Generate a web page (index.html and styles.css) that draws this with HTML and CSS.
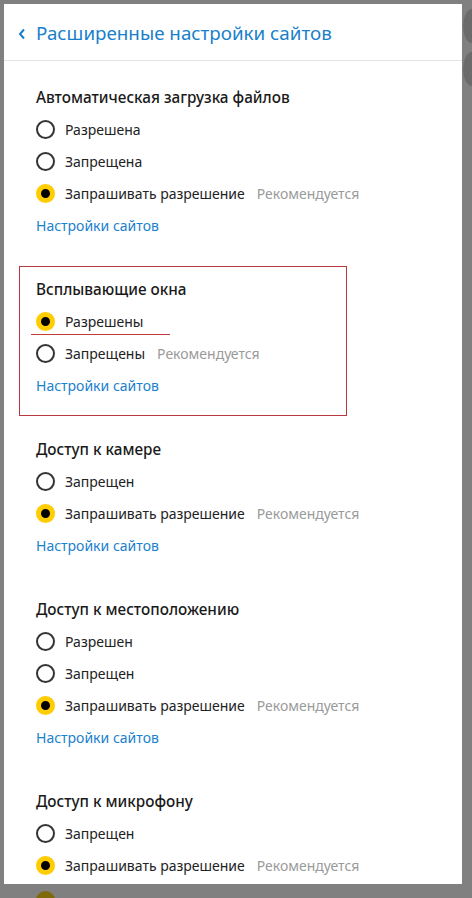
FILE: index.html
```html
<!DOCTYPE html>
<html lang="ru">
<head>
  <meta charset="UTF-8" />
  <meta name="viewport" content="width=device-width, initial-scale=1.0" />
  <title>Расширенные настройки сайтов</title>
  <link rel="stylesheet" href="styles.css">
</head>
<body>

  <div class="side-dot dot-one"></div>
  <div class="side-dot dot-two"></div>

  <div class="panel">
    <div class="header">
      <svg class="back" width="8" height="12" viewBox="0 0 8 12">
        <path d="M6 1.5 L2 6 L6 10.5" fill="none" stroke="#1a7fca" stroke-width="2" />
      </svg>
      <span class="title">Расширенные настройки сайтов</span>
    </div>

    <div class="content">
      <div class="section">
        <div class="section-title">Автоматическая загрузка файлов</div>
        <div class="option"><span class="radio"></span>Разрешена</div>
        <div class="option"><span class="radio"></span>Запрещена</div>
        <div class="option"><span class="radio checked"></span>Запрашивать разрешение<span class="hint">Рекомендуется</span></div>
        <a class="link" href="#">Настройки сайтов</a>
      </div>

      <div class="section marked">
        <div class="frame"></div>
        <div class="underline"></div>
        <div class="section-title">Всплывающие окна</div>
        <div class="option"><span class="radio checked"></span>Разрешены</div>
        <div class="option"><span class="radio"></span>Запрещены<span class="hint">Рекомендуется</span></div>
        <a class="link" href="#">Настройки сайтов</a>
      </div>

      <div class="section">
        <div class="section-title">Доступ к камере</div>
        <div class="option"><span class="radio"></span>Запрещен</div>
        <div class="option"><span class="radio checked"></span>Запрашивать разрешение<span class="hint">Рекомендуется</span></div>
        <a class="link" href="#">Настройки сайтов</a>
      </div>

      <div class="section">
        <div class="section-title">Доступ к местоположению</div>
        <div class="option"><span class="radio"></span>Разрешен</div>
        <div class="option"><span class="radio"></span>Запрещен</div>
        <div class="option"><span class="radio checked"></span>Запрашивать разрешение<span class="hint">Рекомендуется</span></div>
        <a class="link" href="#">Настройки сайтов</a>
      </div>

      <div class="section">
        <div class="section-title">Доступ к микрофону</div>
        <div class="option"><span class="radio"></span>Запрещен</div>
        <div class="option"><span class="radio checked"></span>Запрашивать разрешение<span class="hint">Рекомендуется</span></div>
      </div>
    </div>
  </div>

  <div class="below">
    <span class="dim-radio"></span>
  </div>

</body>
</html>
```

FILE: styles.css
```css
body {
  font-family: "Noto Sans", "Open Sans", sans-serif;
  background-color: #808080;
  margin: 0;
  padding: 4px 0 0 4px;
  overflow: hidden;
  height: 894px;
}
.side-dot {
  position: absolute;
  left: 463px;
  width: 9px;
  height: 34px;
  border-radius: 100% 0 0 100% / 50% 0 0 50%;
  background: #6b6b6b;
}
.dot-one {
  top: 9px;
}
.dot-two {
  top: 52px;
}
.panel {
  width: 458px;
  height: 880px;
  background: #fff;
  overflow: hidden;
}
.header {
  height: 57px;
  border-bottom: 1px solid #e4e4e4;
  display: flex;
  align-items: center;
  padding-left: 14px;
  box-sizing: border-box;
}
.back {
  margin-right: 10px;
  margin-top: 3px;
}
.title {
  color: #1a7fca;
  font-size: 18.8px;
  margin-top: 2px;
}
.content {
  padding: 20px 0 0 32px;
}
.section {
  position: relative;
  margin-bottom: 32px;
}
.section-title {
  height: 32px;
  line-height: 32px;
  font-size: 15.3px;
  font-weight: 500;
  color: #1a1a1a;
}
.option {
  height: 32px;
  display: flex;
  align-items: center;
  font-size: 14px;
  color: #222;
}
.radio {
  width: 19px;
  height: 19px;
  border: 2px solid #333;
  border-radius: 50%;
  box-sizing: border-box;
  margin-right: 10px;
  background: #fff;
  flex-shrink: 0;
}
.radio.checked {
  border: 5.5px solid #ffcc00;
  background: #000;
}
.hint {
  color: #9a9a9a;
  margin-left: 12px;
}
.link {
  display: block;
  height: 32px;
  line-height: 33px;
  font-size: 14px;
  color: #1a80cc;
  text-decoration: none;
}
.frame {
  position: absolute;
  top: -7px;
  left: -17px;
  width: 328px;
  height: 150px;
  border: 1px solid #b83840;
  box-sizing: border-box;
}
.underline {
  position: absolute;
  top: 61px;
  left: -5px;
  width: 139px;
  height: 1px;
  background: #c43a3a;
}
.below {
  padding: 7px 0 0 32px;
}
.dim-radio {
  display: block;
  width: 19px;
  height: 19px;
  border-radius: 50%;
  background: #7f6a08;
}
```
